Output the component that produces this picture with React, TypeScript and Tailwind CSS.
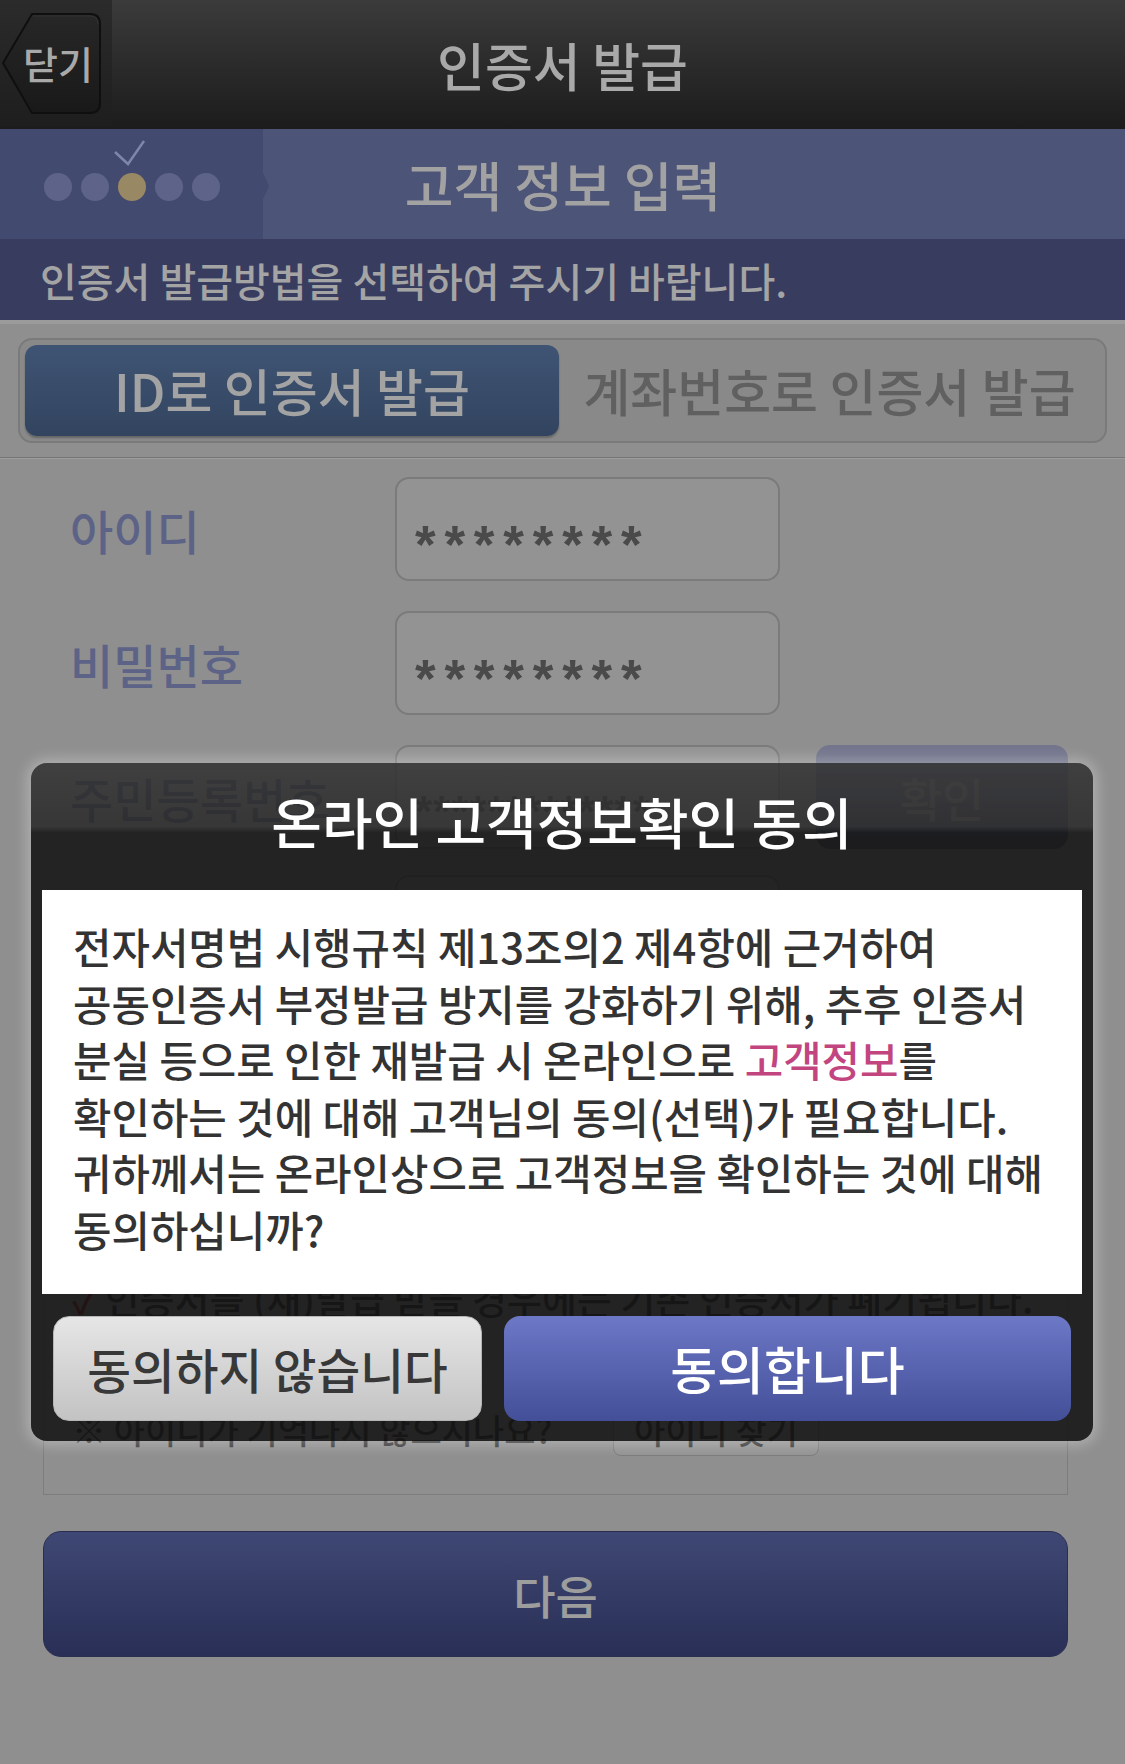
import React from "react";

const steps = [false, false, true, false, false];

function TopBar() {
  return (
    <div className="flex h-[129px] bg-gradient-to-b from-[#3b3b3b] to-[#1c1c1c]">
      <div className="relative flex h-[126px] w-[112px] items-center justify-center bg-gradient-to-b from-[#2b2b2b] to-[#1e1e1e]">
        <svg className="absolute inset-0" width="112" height="126" viewBox="0 0 112 126">
          <defs>
            <linearGradient id="closeBtn" x1="0" y1="0" x2="0" y2="1">
              <stop offset="0" stopColor="#272727" />
              <stop offset="1" stopColor="#191919" />
            </linearGradient>
          </defs>
          <path
            d="M3 63 L32 14 H90 Q100 14 100 24 V103 Q100 113 90 113 H32 Z"
            fill="url(#closeBtn)"
            stroke="#0f0f0f"
            strokeWidth="2"
          />
          <path d="M33 16 H90 Q98 16 98 24" fill="none" stroke="#333" strokeWidth="1" />
        </svg>
        <span className="relative pl-[4px] text-[38px] font-medium leading-none text-[#a9a9a9]">닫기</span>
      </div>
      <div className="flex flex-1 items-center justify-center pr-[112px]">
        <span className="text-[52px] font-medium leading-none text-[#a9a9a9]">인증서 발급</span>
      </div>
    </div>
  );
}

function StepBar() {
  return (
    <div className="flex h-[110px] bg-[#4c5477]">
      <div className="relative flex w-[263px] items-center bg-[#424a6f] pl-[44px] pt-[6px]">
        <svg className="absolute left-[110px] top-[8px]" width="40" height="30" viewBox="0 0 40 30">
          <path d="M5 15 L18 27 L34 4" fill="none" stroke="#7e86ab" strokeWidth="2.5" />
        </svg>
        <div className="flex gap-[9px]">
          {steps.map((on, i) => (
            <div
              key={i}
              className={on ? "h-[28px] w-[28px] rounded-full bg-[#988864]" : "h-[28px] w-[28px] rounded-full bg-[#5e6489]"}
            />
          ))}
        </div>
        <div className="absolute right-[-6px] top-[44px] h-0 w-0 border-y-[13px] border-l-[6px] border-y-transparent border-l-[#424a6f]" />
      </div>
      <div className="flex flex-1 items-center justify-center pr-[262px]">
        <span className="text-[53px] font-medium leading-none text-[#a2a2a2]">고객 정보 입력</span>
      </div>
    </div>
  );
}

function Field({ label, stars }: { label: string; stars: string }) {
  return (
    <div className="flex items-center">
      <div className="w-[395px] pl-[70px] text-[47px] font-medium leading-none text-[#5d6386]">{label}</div>
      <div className="flex h-[104px] w-[385px] items-center rounded-[14px] border-2 border-[#7b7b7b] bg-[#939393] pl-[18px] pt-[30px]">
        <span className="font-['Liberation_Sans',sans-serif] text-[53px] font-bold leading-none tracking-[8.8px] text-[#4a4a4a]">
          {stars}
        </span>
      </div>
    </div>
  );
}

function ConsentModal() {
  return (
    <div className="absolute left-[31px] top-[763px] flex h-[678px] w-[1062px] flex-col overflow-hidden rounded-[16px] bg-[#101010]/85 shadow-[0_0_14px_4px_rgba(255,255,255,0.3)]">
      <div className="flex h-[127px] items-start justify-center bg-gradient-to-b from-white/[0.13] from-0% via-white/[0.09] via-50% to-transparent to-55% pt-[30px]">
        <span className="text-[55px] font-medium leading-none text-white">온라인 고객정보확인 동의</span>
      </div>
      <div className="mx-[11px] h-[404px] bg-white pl-[31px] pt-[28px]">
        <p className="whitespace-nowrap text-[41.8px] font-medium leading-[56.6px] text-[#333333]">
          전자서명법 시행규칙 제13조의2 제4항에 근거하여
          <br />
          공동인증서 부정발급 방지를 강화하기 위해, 추후 인증서
          <br />
          분실 등으로 인한 재발급 시 온라인으로 <span className="text-[#c2457f]">고객정보</span>를
          <br />
          확인하는 것에 대해 고객님의 동의(선택)가 필요합니다.
          <br />
          귀하께서는 온라인상으로 고객정보을 확인하는 것에 대해
          <br />
          동의하십니까?
        </p>
      </div>
      <div className="flex gap-[22px] px-[22px] pt-[22px]">
        <button className="flex h-[105px] w-[429px] items-center justify-center rounded-[16px] border border-[#b5b5b5] bg-gradient-to-b from-[#e6e6e6] to-[#c3c3c3] text-[47.5px] font-medium leading-none text-[#383838]">
          동의하지 않습니다
        </button>
        <button className="flex h-[105px] flex-1 items-center justify-center rounded-[16px] bg-gradient-to-b from-[#6d78c7] to-[#434f97] text-[51px] font-medium leading-none text-white">
          동의합니다
        </button>
      </div>
    </div>
  );
}

export default function App() {
  return (
    <div className="relative h-[1764px] w-[1125px] overflow-hidden bg-[#8f8f8f] font-['Noto_Sans_CJK_KR','Noto_Sans',sans-serif]">
      <TopBar />
      <StepBar />
      <div className="flex h-[81px] items-center bg-[#383d60] pl-[40px]">
        <span className="text-[40px] font-medium leading-none text-[#a4a4a4]">인증서 발급방법을 선택하여 주시기 바랍니다.</span>
      </div>
      <div className="h-[4px] bg-[#9b9b9b]" />

      <div className="px-[18px] pb-[14px] pt-[14px]">
        <div className="flex h-[105px] rounded-[14px] border-2 border-[#7a7a7a] bg-[#898989] p-[5px]">
          <div className="flex w-[534px] items-center justify-center rounded-[12px] bg-gradient-to-b from-[#3f5474] to-[#32445f] shadow-[0_2px_2px_rgba(0,0,0,0.25)]">
            <span className="text-[51px] font-medium leading-none text-[#a3a3a3]">ID로 인증서 발급</span>
          </div>
          <div className="flex flex-1 items-center justify-center">
            <span className="text-[51px] font-medium leading-none text-[#606060]">계좌번호로 인증서 발급</span>
          </div>
        </div>
      </div>
      <div className="h-px bg-[#767676]" />
      <div className="h-px bg-[#9c9c9c]" />

      <div className="flex flex-col gap-[30px] pt-[18px]">
        <Field label="아이디" stars="********" />
        <Field label="비밀번호" stars="********" />
        <div className="flex items-center">
          <div className="w-[395px] pl-[70px] text-[47px] font-medium leading-none text-[#4a4f6a]">주민등록번호</div>
          <div className="flex h-[104px] w-[385px] items-center rounded-[14px] border-2 border-[#7b7b7b] bg-[#939393] pl-[18px] pt-[30px]">
            <span className="font-['Liberation_Sans',sans-serif] text-[44px] font-bold leading-none tracking-[1px] text-[#4a4a4a]">
              *************
            </span>
          </div>
          <div className="ml-[36px] flex h-[104px] w-[252px] items-center justify-center rounded-[14px] bg-gradient-to-b from-[#72758c] to-[#5d6074] text-[46px] font-medium text-[#8a8a8a]">
            확인
          </div>
        </div>
      </div>
      <div className="ml-[395px] mt-[26px] h-[104px] w-[385px] rounded-[14px] border-2 border-[#7b7b7b] bg-[#939393]" />

      <div className="ml-[43px] mr-[57px] mt-[30px] flex h-[486px] flex-col border border-[#7d7d7d] pl-[28px] pt-[269px]">
        <div className="flex h-[38px] items-center whitespace-nowrap text-[38px] font-medium leading-none text-[#3a3a3a]">
          <span className="mr-[6px] text-[#8b2a2a]">✓</span>인증서를 (재)발급 받을 경우에는 기존 인증서가 폐기됩니다.
        </div>
        <div className="mt-[87px] flex h-[52px] items-center">
          <span className="w-[541px] whitespace-nowrap text-[34px] font-medium leading-none text-[#3a3a3a]">
            ※ 아이디가 기억나지 않으시나요?
          </span>
          <div className="flex h-[52px] w-[206px] items-center justify-center rounded-[8px] border border-[#7a7a7a] bg-[#939393] text-[34px] font-medium leading-none text-[#3a3a3a]">
            아이디 찾기
          </div>
        </div>
      </div>

      <div className="ml-[43px] mr-[57px] mt-[36px] flex h-[126px] items-center justify-center rounded-[18px] border border-[#2a2f50] bg-gradient-to-b from-[#3f4874] to-[#292f56]">
        <span className="text-[46px] font-medium leading-none text-[#9d9d9d]">다음</span>
      </div>

      <ConsentModal />
    </div>
  );
}
